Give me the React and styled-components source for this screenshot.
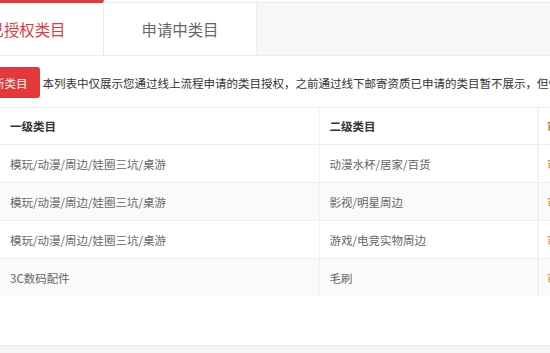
import styled, { createGlobalStyle } from 'styled-components';

const GlobalStyle = createGlobalStyle`
  html, body {
    margin: 0;
    padding: 0;
    background: #fff;
    font-family: "Microsoft YaHei", "Noto Sans CJK SC", "Noto Sans", sans-serif;
  }
  body {
    width: 550px;
    height: 353px;
    overflow: hidden;
  }
`;

const rows = [
  { id: 1, first: '模玩/动漫/周边/娃圈三坑/桌游', second: '动漫水杯/居家/百货', status: '审核通过' },
  { id: 2, first: '模玩/动漫/周边/娃圈三坑/桌游', second: '影视/明星周边', status: '审核通过' },
  { id: 3, first: '模玩/动漫/周边/娃圈三坑/桌游', second: '游戏/电竞实物周边', status: '审核通过' },
  { id: 4, first: '3C数码配件', second: '毛刷', status: '审核通过' },
];

export default function App() {
  return (
    <Page>
      <GlobalStyle />
      <Shifted>
        <TabBar>
          <Tab $active>已授权类目</Tab>
          <Tab>申请中类目</Tab>
        </TabBar>
        <Toolbar>
          <AddButton>申请新类目</AddButton>
          <Notice>
            本列表中仅展示您通过线上流程申请的类目授权，之前通过线下邮寄资质已申请的类目暂不展示，但仍然有效
          </Notice>
        </Toolbar>
      </Shifted>
      <Table>
        <colgroup>
          <col style={{ width: 319 }} />
          <col style={{ width: 219 }} />
          <col style={{ width: 200 }} />
        </colgroup>
        <thead>
          <tr>
            <HeadCell>一级类目</HeadCell>
            <HeadCell>二级类目</HeadCell>
            <HeadCell $status>审核状态</HeadCell>
          </tr>
        </thead>
        <tbody>
          {rows.map(({ id, first, second, status }, i) => (
            <Row key={id} $striped={i % 2 === 1}>
              <Cell>{first}</Cell>
              <Cell>{second}</Cell>
              <Cell $status>{status}</Cell>
            </Row>
          ))}
        </tbody>
      </Table>
      <Footer />
    </Page>
  );
}

const Page = styled.div`
  width: 550px;
  height: 353px;
  overflow: hidden;
  display: flex;
  flex-direction: column;
`;

const Shifted = styled.div`
  margin-left: -49px;
  width: 650px;
`;

const TabBar = styled.div`
  display: flex;
  margin-top: 2px;
  height: 52px;
  background: #f7f7f7;
  border-top: 1px solid #e8e8e8;
  border-bottom: 1px solid #ededed;
`;

const Tab = styled.div`
  width: 153px;
  box-sizing: border-box;
  display: flex;
  align-items: center;
  justify-content: center;
  background: #fff;
  font-size: 15.4px;
  color: ${({ $active }) => ($active ? '#e4393c' : '#666')};
  border-right: 1px solid #ededed;
  ${({ $active }) =>
    $active &&
    `
    margin-top: -3px;
    height: 55px;
    border-top: 3px solid #e4393c;
  `}
`;

const Toolbar = styled.div`
  display: flex;
  align-items: center;
  gap: 3px;
  padding: 11px 0 9px 7px;
  border-bottom: 1px solid #eee;
`;

const AddButton = styled.button`
  height: 31px;
  padding: 0 12px;
  border: none;
  border-radius: 3px;
  background: #e4393c;
  color: #fff;
  font-family: inherit;
  font-size: 11.5px;
  cursor: pointer;
`;

const Notice = styled.span`
  font-size: 11.5px;
  color: #333;
  white-space: nowrap;
`;

const Table = styled.table`
  width: 738px;
  table-layout: fixed;
  border-collapse: collapse;
  font-size: 11.5px;
`;

const HeadCell = styled.th`
  height: 36px;
  padding: 0 10px;
  text-align: left;
  font-weight: bold;
  color: ${({ $status }) => ($status ? '#c7812a' : '#333')};
  border-bottom: 1px solid #eee;
  border-left: 2px solid #f2f2f2;
  &:first-child {
    border-left: none;
  }
  &:nth-child(2) {
    border-left-width: 1px;
  }
  &:last-child {
    padding-left: 8px;
  }
`;

const Row = styled.tr`
  background: ${({ $striped }) => ($striped ? '#fafafa' : '#fff')};
`;

const Cell = styled.td`
  height: 37px;
  padding: 0 10px;
  color: ${({ $status }) => ($status ? '#d9892b' : '#666')};
  border-bottom: 1px solid #eee;
  border-left: 2px solid #f2f2f2;
  white-space: nowrap;
  &:first-child {
    border-left: none;
  }
  &:nth-child(2) {
    border-left-width: 1px;
  }
  &:last-child {
    padding-left: 8px;
  }
  tr:last-child > & {
    border-bottom: none;
  }
`;

const Footer = styled.div`
  margin-top: auto;
  height: 7px;
  background: #f5f5f5;
  border-top: 1px solid #eee;
`;
